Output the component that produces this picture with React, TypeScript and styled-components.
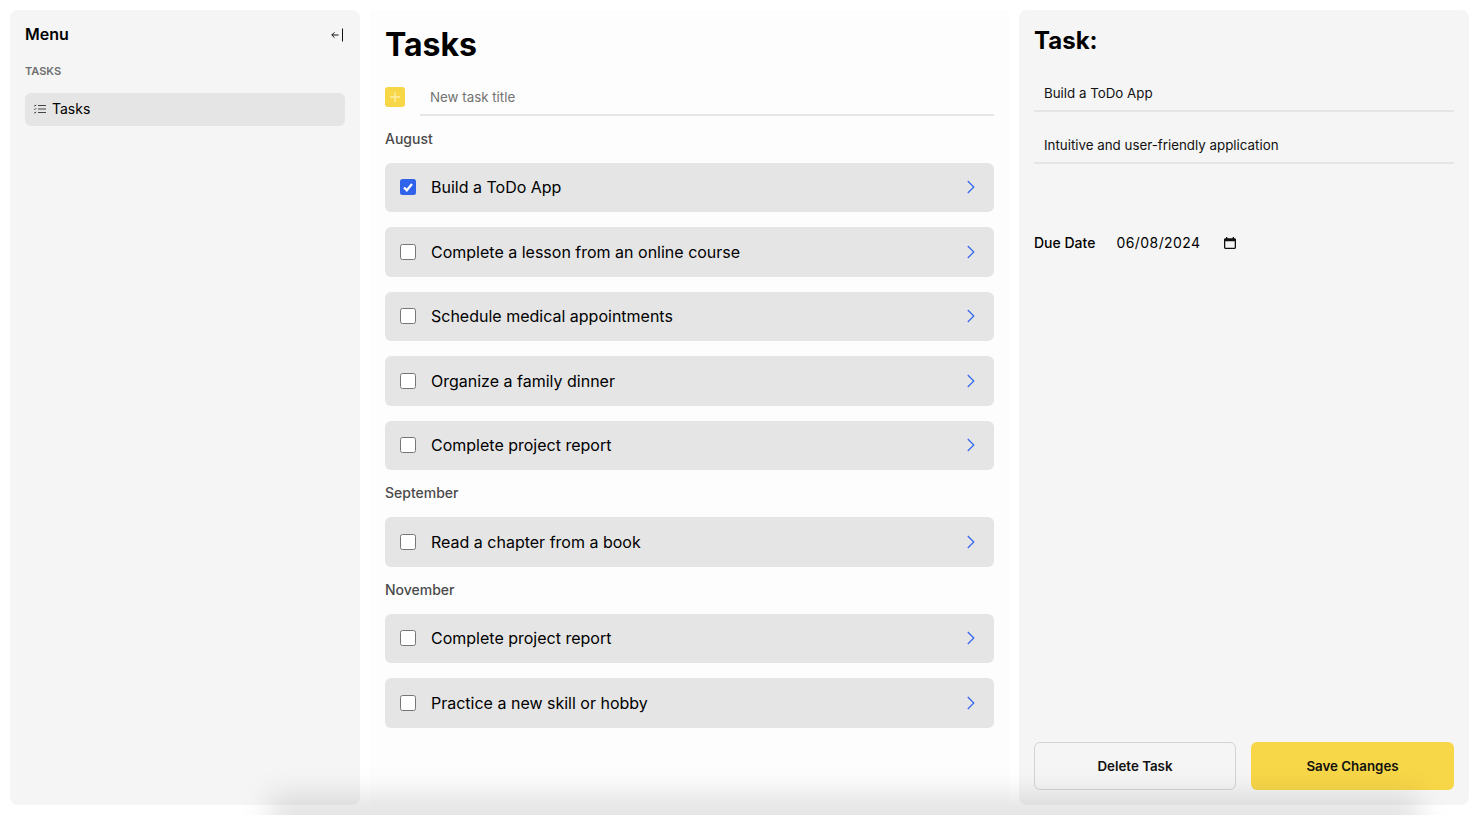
import React from "react";
import styled, { createGlobalStyle } from "styled-components";

const Global = createGlobalStyle`
  * { box-sizing: border-box; }
  html, body { margin: 0; padding: 0; height: 100%; background: #fff; }
  body { font-family: Inter, "Liberation Sans", sans-serif; color: #000; overflow: hidden; }
  #root { height: 100%; }
`;

const Page = styled.div`
  position: relative;
  height: 815px;
  padding: 10px;
  display: grid;
  grid-template-columns: 350px 1fr 450px;
  gap: 10px;
  overflow: hidden;
`;

const BottomShade = styled.div`
  position: absolute;
  left: 270px;
  right: 60px;
  bottom: -24px;
  height: 44px;
  background: rgba(0, 0, 0, 0.11);
  filter: blur(14px);
  pointer-events: none;
`;

const Sidebar = styled.aside`
  background: #f5f5f5;
  border-radius: 8px;
  padding: 15px;
  display: flex;
  flex-direction: column;
`;

const MenuHeader = styled.div`
  display: flex;
  align-items: center;
  justify-content: space-between;
  height: 19px;
`;

const MenuTitle = styled.h2`
  margin: 0;
  font-size: 16px;
  line-height: 19px;
  font-weight: 600;
`;

const Collapse = styled.button`
  border: 0;
  background: none;
  padding: 0;
  display: flex;
  color: #111;
`;

const SectionCaption = styled.div`
  margin-top: 21px;
  font-size: 11px;
  line-height: 13px;
  font-weight: 600;
  color: #6f6f6f;
`;

const NavItem = styled.div`
  margin-top: 15px;
  height: 33px;
  border-radius: 6px;
  background: #e5e5e5;
  display: flex;
  align-items: center;
  gap: 5px;
  padding: 0 0 2px 8px;
  font-size: 14px;
`;

const Main = styled.main`
  padding: 15px;
  display: flex;
  flex-direction: column;
  gap: 15px;
  background-color: #fdfdfd;
`;

const PageTitle = styled.h1`
  margin: 0;
  font-size: 32px;
  height: 38.5px;
  line-height: 39px;
  font-weight: 700;
`;

const NewTask = styled.div`
  display: flex;
  align-items: center;
`;

const AddButton = styled.div`
  flex: none;
  width: 20px;
  height: 20px;
  margin-top: -1px;
  border-radius: 3px;
  background: #f7d648;
  color: #fdeea8;
  display: flex;
  align-items: center;
  justify-content: center;
`;

const UnderlinedField = styled.div`
  border-bottom: 2px solid #e5e5e5;
  padding-left: 10px;
  display: flex;
  align-items: center;
  font-size: 13.33px;
`;

const NewTaskField = styled(UnderlinedField)`
  flex: 1;
  margin-left: 15px;
  height: 37px;
  padding-top: 1px;
  color: #737373;
`;

const GroupLabel = styled.div`
  font-size: 14px;
  line-height: 15px;
  font-weight: 500;
  color: #4a4a4a;
  height: 17px;
`;

const Row = styled.div`
  height: 49.5px;
  flex: none;
  border-radius: 6px;
  background: #e5e5e5;
  display: flex;
  align-items: center;
  padding: 0 18px 0 15px;
  font-size: 16px;
`;

const Check = styled.span<{ $on?: boolean }>`
  flex: none;
  width: 16px;
  height: 16px;
  border-radius: 2.5px;
  margin-right: 15px;
  background: ${(p) => (p.$on ? "#2f63ea" : "#fff")};
  border: ${(p) => (p.$on ? "none" : "1px solid #767676")};
  display: flex;
  align-items: center;
  justify-content: center;
`;

const RowText = styled.span`
  flex: 1;
`;

const Details = styled.aside`
  background: #f5f5f5;
  border-radius: 8px;
  padding: 15px;
  display: flex;
  flex-direction: column;
`;

const DetailsTitle = styled.h2`
  margin: 1px 0 0;
  font-size: 24px;
  line-height: 29px;
  font-weight: 700;
`;

const DetailField = styled(UnderlinedField)`
  height: 37px;
  color: #111;
`;

const TitleField = styled(DetailField)`
  margin-top: 20px;
`;

const DescField = styled(DetailField)`
  margin-top: 15px;
`;

const DueRow = styled.div`
  margin-top: 69.5px;
  display: flex;
  align-items: center;
  height: 18px;
  font-size: 14px;
`;

const DueLabel = styled.span`
  font-weight: 500;
  width: 82.5px;
`;

const DueValue = styled.span`
  width: 106px;
  letter-spacing: 0.42px;
`;

const Actions = styled.div`
  margin-top: auto;
  display: grid;
  grid-template-columns: 202fr 203fr;
  gap: 15px;
`;

const ActionButton = styled.button<{ $primary?: boolean }>`
  height: 48px;
  border-radius: 6px;
  font: 600 13.33px Inter, sans-serif;
  color: #111;
  background: ${(p) => (p.$primary ? "#f7d648" : "#f5f5f5")};
  border: ${(p) => (p.$primary ? "none" : "1px solid #d4d4d4")};
`;

const Chevron = () => (
  <svg width="10" height="14" viewBox="0 0 10 14" fill="none" stroke="#2f66ee" strokeWidth="1.2">
    <path d="M1.8 1l6 6-6 6" />
  </svg>
);

const groups = [
  { label: "August", tasks: ["Build a ToDo App", "Complete a lesson from an online course", "Schedule medical appointments", "Organize a family dinner", "Complete project report"] },
  { label: "September", tasks: ["Read a chapter from a book"] },
  { label: "November", tasks: ["Complete project report", "Practice a new skill or hobby"] },
];

export default function App() {
  return (
    <>
      <Global />
      <Page>
        <Sidebar>
          <MenuHeader>
            <MenuTitle>Menu</MenuTitle>
            <Collapse aria-label="Collapse">
              <svg width="14" height="14" viewBox="0 0 14 14" fill="none" stroke="currentColor" strokeWidth="1">
                <path d="M7.500 7H.8M3.500 4.300L.8 7l2.700 2.700M11.500.5v13" />
              </svg>
            </Collapse>
          </MenuHeader>
          <SectionCaption>TASKS</SectionCaption>
          <NavItem>
            <svg width="14" height="14" viewBox="0 0 14 14" fill="none" stroke="#444" strokeWidth="1">
              <path d="M5 3.500h8M5 7h8M5 10.500h8M1.200 3.500l.7.7 1.200-1.400M1.200 7l.7.7 1.200-1.400M1.200 10.500l.7.7 1.200-1.400" />
            </svg>
            Tasks
          </NavItem>
        </Sidebar>

        <Main>
          <PageTitle>Tasks</PageTitle>
          <NewTask>
            <AddButton>
              <svg width="12" height="12" viewBox="0 0 12 12" fill="none" stroke="currentColor" strokeWidth="1.4">
                <path d="M6 1v10M1 6h10" />
              </svg>
            </AddButton>
            <NewTaskField>New task title</NewTaskField>
          </NewTask>
          {groups.map((g) => (
            <React.Fragment key={g.label}>
              <GroupLabel>{g.label}</GroupLabel>
              {g.tasks.map((t, i) => {
                const on = t === "Build a ToDo App";
                return (
                  <Row key={t + i}>
                    <Check $on={on}>
                      {on && (
                        <svg width="12" height="12" viewBox="0 0 12 12" fill="none" stroke="#fff" strokeWidth="2.2">
                          <path d="M2 6.500l2.800 2.800L10 3" />
                        </svg>
                      )}
                    </Check>
                    <RowText>{t}</RowText>
                    <Chevron />
                  </Row>
                );
              })}
            </React.Fragment>
          ))}
        </Main>

        <Details>
          <DetailsTitle>Task:</DetailsTitle>
          <TitleField>Build a ToDo App</TitleField>
          <DescField>Intuitive and user-friendly application</DescField>
          <DueRow>
            <DueLabel>Due Date</DueLabel>
            <DueValue>06/08/2024</DueValue>
            <svg width="14" height="14" viewBox="0 0 14 14">
              <path d="M3 1h1.300v1.200h5.400V1H11v1.200h.6c.8 0 1.400.6 1.400 1.400v8c0 .8-.6 1.400-1.400 1.400H2.400c-.8 0-1.400-.6-1.400-1.400v-8c0-.8.6-1.400 1.400-1.400H3V1zm-.7 4.300v6.400h9.400V5.300H2.300z" fill="#111" />
            </svg>
          </DueRow>
          <Actions>
            <ActionButton>Delete Task</ActionButton>
            <ActionButton $primary>Save Changes</ActionButton>
          </Actions>
        </Details>
        <BottomShade />
      </Page>
    </>
  );
}
